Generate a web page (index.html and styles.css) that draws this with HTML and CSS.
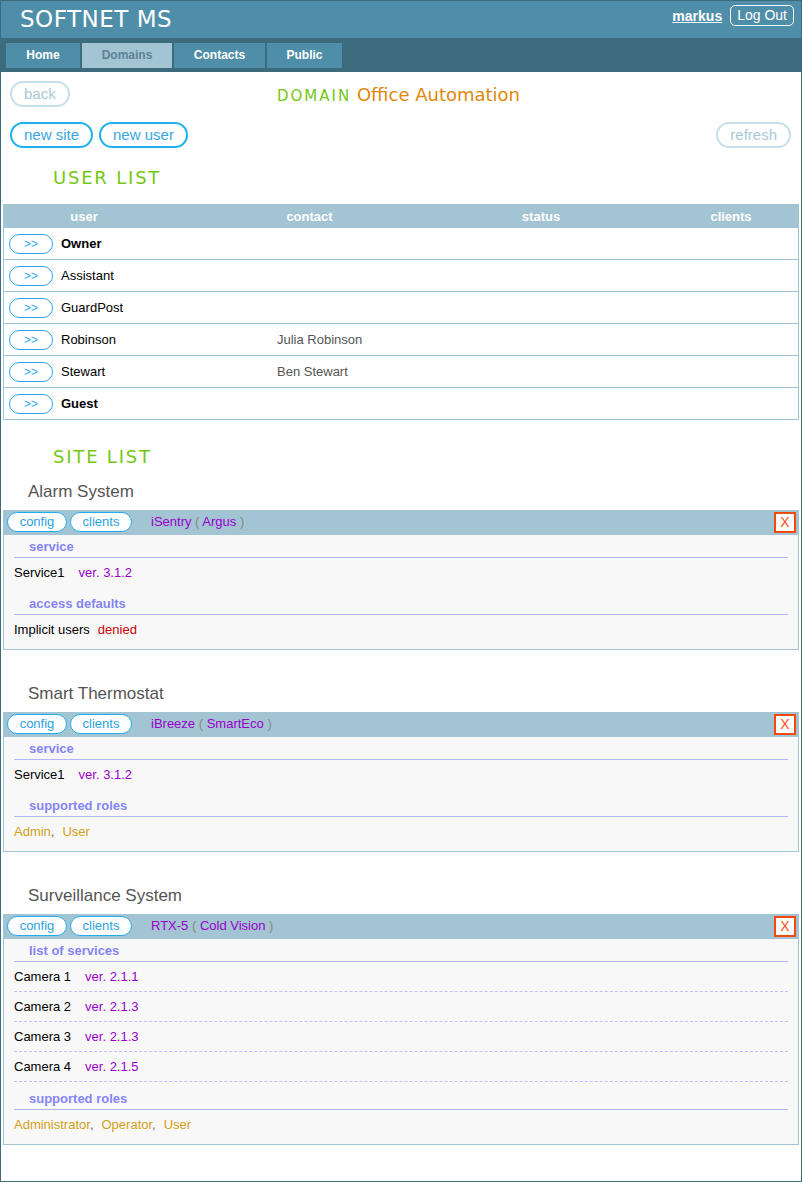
FILE: index.html
```html
<!DOCTYPE html>
<html lang="en">
<head>
<meta charset="utf-8">
<title>SOFTNET MS</title>
<link rel="stylesheet" href="styles.css">
</head>
<body>
<div class="page">
  <header class="topbar">
    <div class="brand">SOFTNET MS</div>
    <div class="user-area">
      <a class="username">markus</a>
      <span class="logout">Log Out</span>
    </div>
  </header>
  <nav class="nav">
    <div class="tab tab-home">Home</div>
    <div class="tab tab-domains active">Domains</div>
    <div class="tab tab-contacts">Contacts</div>
    <div class="tab tab-public">Public</div>
  </nav>

  <main class="content">
    <div class="toolbar">
      <div><span class="pill muted">back</span></div>
      <div class="domain-title"><span class="domain-label">DOMAIN</span> <span class="domain-name">Office Automation</span></div>
      <div></div>
    </div>
    <div class="actions">
      <span class="pill primary">new site</span>
      <span class="pill primary">new user</span>
      <span class="pill muted refresh">refresh</span>
    </div>

    <h2 class="section-title user-title">USER LIST</h2>

    <div class="user-table">
      <div class="thead">
        <div>user</div>
        <div>contact</div>
        <div>status</div>
        <div class="th-clients">clients</div>
      </div>
      <div class="trow">
        <div class="ucell"><span class="go">&gt;&gt;</span><span class="uname bold">Owner</span></div>
        <div class="ccell"></div>
      </div>
      <div class="trow">
        <div class="ucell"><span class="go">&gt;&gt;</span><span class="uname">Assistant</span></div>
        <div class="ccell"></div>
      </div>
      <div class="trow">
        <div class="ucell"><span class="go">&gt;&gt;</span><span class="uname">GuardPost</span></div>
        <div class="ccell"></div>
      </div>
      <div class="trow">
        <div class="ucell"><span class="go">&gt;&gt;</span><span class="uname">Robinson</span></div>
        <div class="ccell">Julia Robinson</div>
      </div>
      <div class="trow">
        <div class="ucell"><span class="go">&gt;&gt;</span><span class="uname">Stewart</span></div>
        <div class="ccell">Ben Stewart</div>
      </div>
      <div class="trow">
        <div class="ucell"><span class="go">&gt;&gt;</span><span class="uname bold">Guest</span></div>
        <div class="ccell"></div>
      </div>
    </div>

    <h2 class="section-title site-list-title">SITE LIST</h2>

    <section class="site first">
      <div class="site-title">Alarm System</div>
      <div class="site-box">
        <div class="site-head">
          <span class="chip chip-config">config</span>
          <span class="chip chip-clients">clients</span>
          <span class="site-label"><span class="model">iSentry</span> <span class="paren">(</span> <span class="model">Argus</span> <span class="paren">)</span></span>
          <span class="close">X</span>
        </div>
        <div class="site-body">
          <div class="sec-head">service</div>
          <div class="item">Service1<span class="ver">ver. 3.1.2</span></div>
          <div class="sec-head later">access defaults</div>
          <div class="item">Implicit users<span class="denied">denied</span></div>
        </div>
      </div>
    </section>

    <section class="site">
      <div class="site-title">Smart Thermostat</div>
      <div class="site-box">
        <div class="site-head">
          <span class="chip chip-config">config</span>
          <span class="chip chip-clients">clients</span>
          <span class="site-label"><span class="model">iBreeze</span> <span class="paren">(</span> <span class="model">SmartEco</span> <span class="paren">)</span></span>
          <span class="close">X</span>
        </div>
        <div class="site-body">
          <div class="sec-head">service</div>
          <div class="item">Service1<span class="ver">ver. 3.1.2</span></div>
          <div class="sec-head later">supported roles</div>
          <div class="item"><span class="role">Admin</span><span class="sep">,</span><span class="role">User</span></div>
        </div>
      </div>
    </section>

    <section class="site">
      <div class="site-title">Surveillance System</div>
      <div class="site-box">
        <div class="site-head">
          <span class="chip chip-config">config</span>
          <span class="chip chip-clients">clients</span>
          <span class="site-label"><span class="model">RTX-5</span> <span class="paren">(</span> <span class="model">Cold Vision</span> <span class="paren">)</span></span>
          <span class="close">X</span>
        </div>
        <div class="site-body">
          <div class="sec-head">list of services</div>
          <div class="item dashed">Camera 1<span class="ver">ver. 2.1.1</span></div>
          <div class="item dashed">Camera 2<span class="ver">ver. 2.1.3</span></div>
          <div class="item dashed">Camera 3<span class="ver">ver. 2.1.3</span></div>
          <div class="item dashed">Camera 4<span class="ver">ver. 2.1.5</span></div>
          <div class="sec-head later">supported roles</div>
          <div class="item"><span class="role">Administrator</span><span class="sep">,</span><span class="role">Operator</span><span class="sep">,</span><span class="role">User</span></div>
        </div>
      </div>
    </section>
  </main>
</div>
</body>
</html>
```

FILE: styles.css
```css
html, body {
  margin: 0;
  padding: 0;
}

body {
  font-family: "Liberation Sans", Arial, sans-serif;
  font-size: 13px;
  color: #000;
  background: #fff;
}

.page {
  border: 1px solid #3d6b7e;
  min-height: 100vh;
  box-sizing: border-box;
}

/* Top bar */
.topbar {
  background: #4f8ea8;
  height: 37px;
  display: flex;
  justify-content: space-between;
  align-items: flex-start;
  padding: 0 7px 0 19px;
}

.brand {
  font-family: "DejaVu Sans", Verdana, sans-serif;
  font-size: 23px;
  line-height: 37px;
  color: #fff;
  letter-spacing: 0.5px;
}

.user-area {
  display: flex;
  align-items: center;
  gap: 8px;
  margin-top: 4px;
}

.username {
  font-weight: bold;
  font-size: 14px;
  color: #fff;
  text-decoration: underline;
}

.logout {
  border: 1px solid #fff;
  border-radius: 5px;
  color: #fff;
  font-size: 14px;
  line-height: 19px;
  padding: 0 6px;
}

/* Nav tabs */
.nav {
  background: #3d6b7e;
  height: 34px;
  box-sizing: border-box;
  padding: 5px 0 0 5px;
  display: flex;
  gap: 2px;
}

.tab {
  height: 25px;
  line-height: 25px;
  text-align: center;
  font-weight: bold;
  font-size: 12px;
  color: #fff;
  background: #4f8ea8;
}

.tab-home { width: 74px; }
.tab-domains { width: 90px; }
.tab-contacts { width: 91px; }
.tab-public { width: 75px; }

.tab.active {
  background: #a2c4d3;
  color: #5d8397;
}

/* Content */
.content {
  padding: 9px 2px 0;
}

.toolbar {
  display: grid;
  grid-template-columns: 1fr auto 1fr;
  align-items: center;
  padding: 0 8px 0 7px;
}

.pill {
  display: inline-block;
  height: 26px;
  box-sizing: border-box;
  border: 2px solid;
  border-radius: 13px;
  padding: 0 12px;
  font-size: 15px;
  line-height: 22px;
  background: #fff;
}

.pill.muted {
  border-color: #c5e0ea;
  color: #a8c8d8;
}

.pill.primary {
  border-color: #1cb2ee;
  color: #38a6de;
}

.domain-title {
  font-family: "DejaVu Sans", Verdana, sans-serif;
  font-size: 18px;
  white-space: nowrap;
  margin-right: 4px;
}

.domain-label {
  font-size: 15px;
  letter-spacing: 2px;
  color: #74c815;
}

.domain-name {
  color: #e0880c;
}

.actions {
  display: flex;
  gap: 6px;
  margin-top: 15px;
  padding: 0 8px 0 7px;
}

.actions .refresh {
  margin-left: auto;
}

.section-title {
  margin: 0;
  font-family: "DejaVu Sans", Verdana, sans-serif;
  font-weight: normal;
  font-size: 18px;
  line-height: 24px;
  letter-spacing: 1.8px;
  color: #74c815;
  padding-left: 50px;
}

.user-title {
  margin-top: 18px;
}

.site-list-title {
  margin-top: 25px;
}

/* User table */
.user-table {
  margin-top: 14px;
  border: 1px solid #9cc4d4;
}

.thead {
  display: grid;
  grid-template-columns: 160px 291px 172px 1fr;
  background: #a2c4d3;
  height: 23px;
  line-height: 23px;
  color: #fff;
  font-weight: bold;
  text-align: center;
}

.th-clients {
  padding-left: 37px;
}

.trow {
  display: grid;
  grid-template-columns: 268px 1fr;
  height: 31px;
  align-items: center;
}

.trow:not(:last-child) {
  border-bottom: 1px solid #9cc4d4;
}

.ucell {
  display: flex;
  align-items: center;
  padding-left: 5px;
}

.go {
  width: 44px;
  height: 20px;
  box-sizing: border-box;
  border: 1px solid #22aaee;
  border-radius: 10px;
  color: #3aaae6;
  font-size: 12px;
  line-height: 18px;
  text-align: center;
}

.uname {
  margin-left: 8px;
}

.bold {
  font-weight: bold;
}

.ccell {
  padding-left: 5px;
  color: #555;
}

/* Sites */
.site {
  margin-top: 34px;
}

.site.first {
  margin-top: 13px;
}

.site-title {
  font-size: 17px;
  line-height: 20px;
  color: #555;
  padding-left: 25px;
  margin-bottom: 8px;
}

.site-box {
  border: 1px solid #a2c4d3;
  background: #f8f8f8;
}

.site-head {
  background: #a2c4d3;
  height: 24px;
  box-sizing: border-box;
  display: flex;
  align-items: flex-start;
  padding: 1px 2px 0 3px;
}

.chip {
  height: 20px;
  box-sizing: border-box;
  border: 1px solid #22aaee;
  border-radius: 10px;
  background: #fff;
  color: #2aa2e0;
  font-size: 13px;
  line-height: 18px;
  text-align: center;
}

.chip-config { width: 60px; }
.chip-clients { width: 62px; margin-left: 3px; }

.site-label {
  margin-left: 19px;
  line-height: 20px;
}

.model {
  color: #9a00cc;
}

.paren {
  color: #888;
}

.close {
  margin-left: auto;
  width: 22px;
  height: 21px;
  box-sizing: border-box;
  border: 2px solid #f04a10;
  background: #fff;
  color: #ff5020;
  font-size: 14px;
  line-height: 17px;
  text-align: center;
}

.site-body {
  padding: 4px 10px 5px;
}

.sec-head {
  font-weight: bold;
  color: #8585f5;
  line-height: 16px;
  padding: 0 0 2px 15px;
  border-bottom: 1px solid #b4b4ff;
}

.sec-head.later {
  margin-top: 9px;
}

.item {
  line-height: 17px;
  padding: 6px 0;
}

.item.dashed {
  border-bottom: 1px dashed #c0c0ff;
}

.ver {
  color: #9a00cc;
  margin-left: 14px;
}

.denied {
  color: #cc0000;
  margin-left: 8px;
}

.role {
  color: #d4a020;
}

.sep {
  color: #666;
  margin-right: 8px;
}
```
